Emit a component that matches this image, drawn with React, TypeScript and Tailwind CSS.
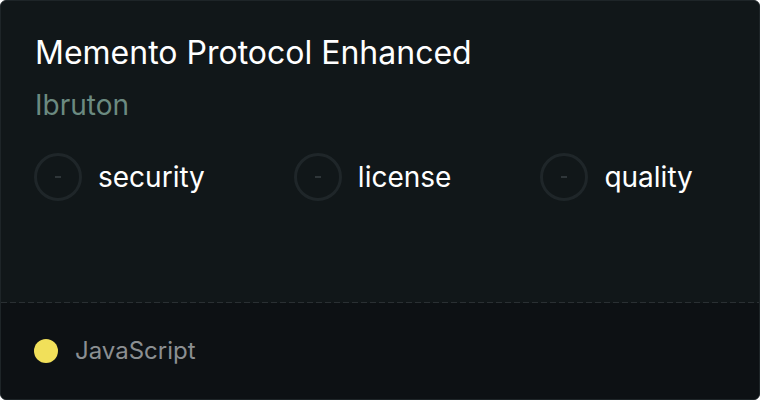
import React from 'react';

type Check = { label: string };

const checks: Check[] = [{ label: 'security' }, { label: 'license' }, { label: 'quality' }];

export default function App() {
  return (
    <div
      className="w-[760px] h-[400px] bg-white"
      style={{ fontFamily: 'Inter, "Noto Sans", sans-serif' }}
    >
      <div className="flex h-full w-full flex-col overflow-hidden rounded-md border border-[#1e2528] bg-[#111719]">
        <div className="flex flex-1 flex-col px-[33px] pt-[33px]">
          <h1 className="ml-px text-[32px] leading-[38px] font-normal text-white">
            Memento Protocol Enhanced
          </h1>
          <p className="ml-px mt-[16px] text-[28px] leading-[34px] text-[#6b8a80]">Ibruton</p>
          <div className="mt-[31px] flex items-center gap-[89px]">
            {checks.map((c) => (
              <div key={c.label} className="flex items-center gap-4">
                <div className="flex h-12 w-12 items-center justify-center rounded-full border-[3px] border-[#1f2629]">
                  <div className="h-[2px] w-[6px] bg-[#2f3639]" />
                </div>
                <span className="text-[28px] leading-[34px] text-white">{c.label}</span>
              </div>
            ))}
          </div>
        </div>
        <div className="h-px w-full bg-[repeating-linear-gradient(to_right,#2a3033_0_6px,transparent_6px_9px)]" />
        <div className="flex h-[96px] items-center gap-[17px] bg-[#0d1114] px-[33px]">
          <div className="h-6 w-6 rounded-full bg-[#f1e05a]" />
          <span className="text-[24px] leading-[30px] text-[#8b8f92]">JavaScript</span>
        </div>
      </div>
    </div>
  );
}
